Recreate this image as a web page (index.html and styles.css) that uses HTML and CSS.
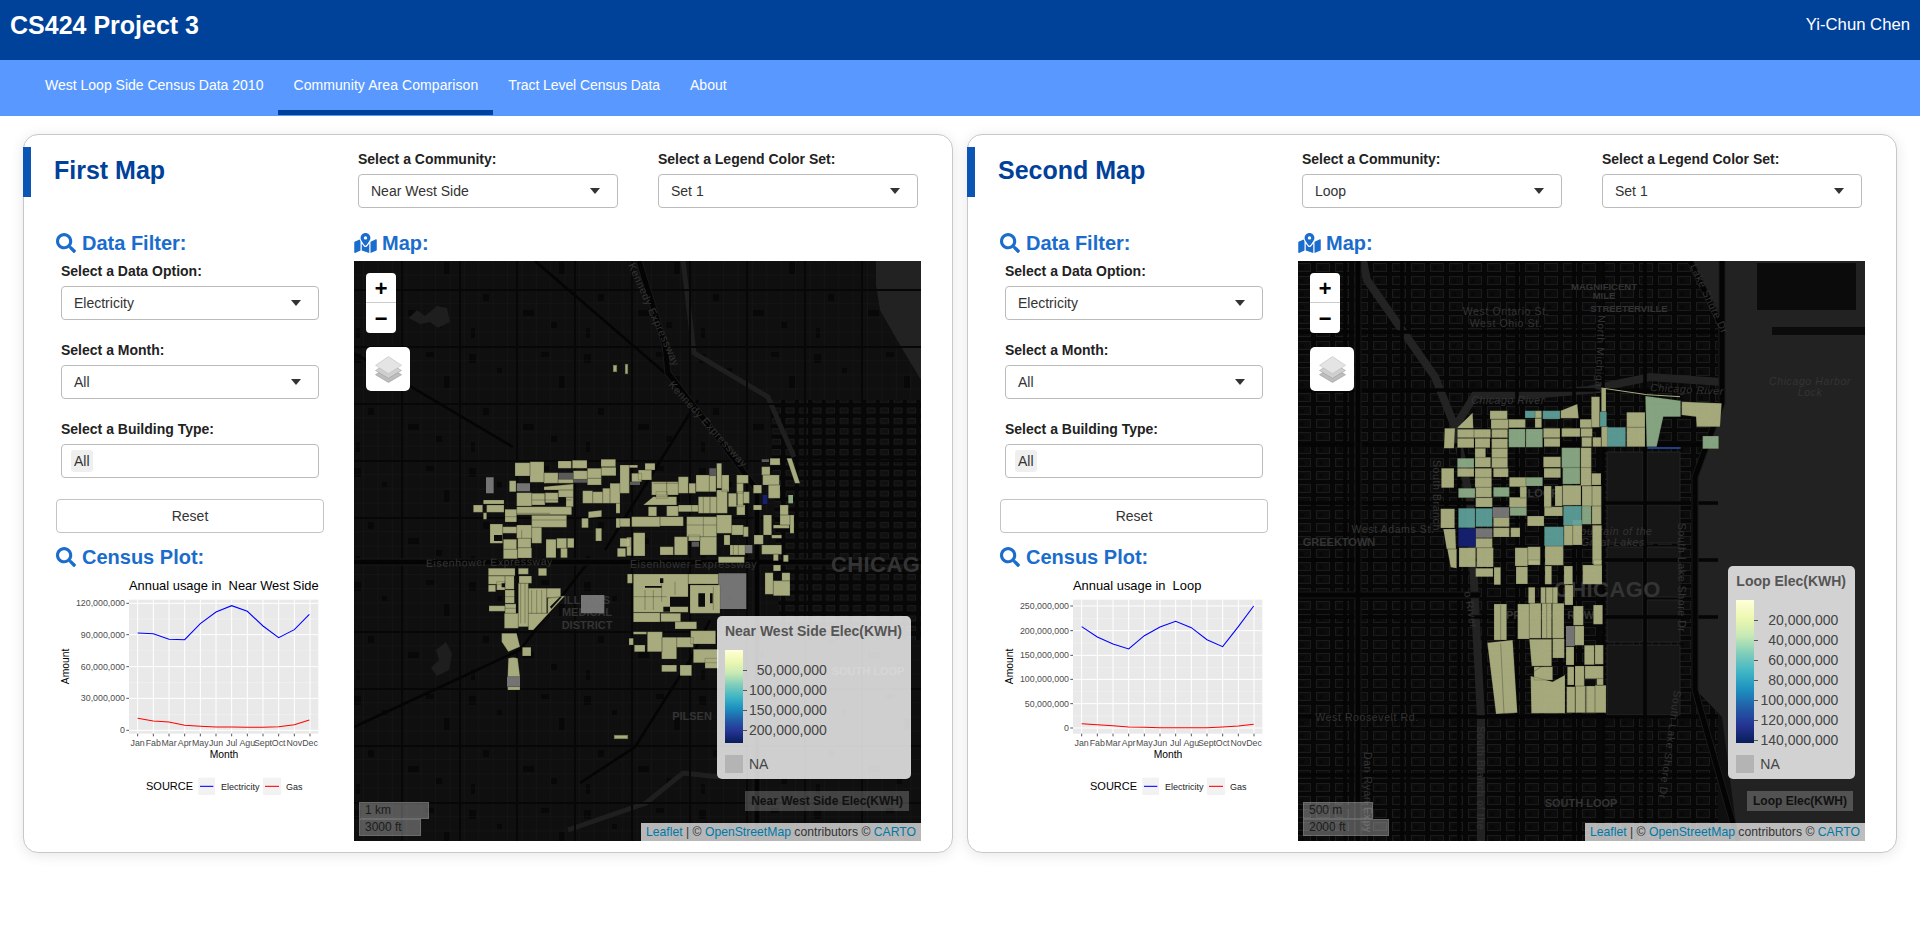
FILE: index.html
```html
<!DOCTYPE html>
<html lang="en">
<head>
<meta charset="utf-8">
<title>CS424 Project 3</title>
<link rel="stylesheet" href="styles.css">
</head>
<body>
<header class="topbar"><span class="brand">CS424 Project 3</span><span class="user">Yi-Chun Chen</span></header>
<nav class="tabs">
  <a class="tab">West Loop Side Census Data 2010</a>
  <a class="tab active">Community Area Comparison</a>
  <a class="tab">Tract Level Census Data</a>
  <a class="tab">About</a>
</nav>
<svg class="defs" width="0" height="0" aria-hidden="true">
  <symbol id="i-search" viewBox="0 0 512 512"><path d="M505 442.7L405.3 343c-4.5-4.5-10.6-7-17-7H372c27.6-35.3 44-79.7 44-128C416 93.1 322.9 0 208 0S0 93.1 0 208s93.1 208 208 208c48.3 0 92.7-16.4 128-44v16.3c0 6.4 2.5 12.5 7 17l99.7 99.7c9.4 9.4 24.6 9.4 33.9 0l28.3-28.3c9.4-9.4 9.4-24.6.1-34zM208 336c-70.7 0-128-57.2-128-128 0-70.7 57.2-128 128-128 70.7 0 128 57.2 128 128 0 70.7-57.2 128-128 128z"/></symbol>
  <symbol id="i-map" viewBox="0 0 576 512"><path d="M288 0c-69.59 0-126 56.41-126 126 0 56.26 82.35 158.8 113.9 196.02 6.39 7.54 17.82 7.54 24.2 0C331.65 284.8 414 182.26 414 126 414 56.41 357.59 0 288 0zm0 168c-23.2 0-42-18.8-42-42s18.8-42 42-42 42 18.8 42 42-18.8 42-42 42zM20.12 215.95A32.006 32.006 0 0 0 0 245.66v250.32c0 11.32 11.43 19.06 21.94 14.86L160 448V214.92c-8.84-15.98-16.07-31.54-21.25-46.42L20.12 215.95zM288 359.67c-14.07 0-27.38-6.18-36.51-16.96-19.66-23.2-40.57-49.62-59.49-76.72v182l192 64V266c-18.92 27.09-39.82 53.52-59.49 76.72-9.13 10.77-22.44 16.95-36.51 16.95zm266.06-198.51L416 224v288l139.88-55.95A31.996 31.996 0 0 0 576 426.34V176.02c0-11.32-11.43-19.06-21.94-14.86z"/></symbol>
  <symbol id="i-layers" viewBox="0 0 26 26"><path class="lay-b" d="M13 10L25.5 18L13 25.5L.5 18z"/><path class="lay-m" d="M13 6L25.5 14L13 21.5L.5 14z"/><path class="lay-t" d="M13 .5L25.5 9L13 17L.5 9z"/></symbol>
  <pattern id="minor1" width="14.4" height="14.25" patternUnits="userSpaceOnUse" x="3" y="4"><path d="M14.4 0H0V14.25" class="minor"/></pattern>
  <pattern id="bld1" width="115" height="114" patternUnits="userSpaceOnUse" x="3" y="4"><path class="bld" d="M6 8h7v9H6zM34 22h5v5h-5zM78 6h8v5h-8zM96 30h6v12h-6zM20 62h6v7h-6zM60 78h11v6H60zM88 90h6v6h-6zM8 96h4v10H8z"/></pattern>
  <pattern id="dense1" width="13.5" height="10.4" patternUnits="userSpaceOnUse" x="0" y="0"><rect width="13.5" height="10.4" class="dense-bg"/><rect x="3" y="2.5" width="8" height="5" class="dense-cell"/></pattern>
  <pattern id="dense2" width="19" height="13" patternUnits="userSpaceOnUse" x="2" y="1"><rect width="19" height="13" class="dense-bg"/><rect x="3.5" y="2.5" width="13" height="8" class="dense-cell2"/><path class="bld" d="M6 5h4v4H6z"/></pattern>
</svg>
<main class="board">

<section class="card">
  <div class="card-top">
    <h2 class="card-title">First Map</h2>
    <div class="top-field"><label class="lbl">Select a Community:</label><div class="sel">Near West Side</div></div>
    <div class="top-field"><label class="lbl">Select a Legend Color Set:</label><div class="sel">Set 1</div></div>
  </div>
  <div class="card-body">
    <div class="side">
      <h3 class="head"><svg class="ico"><use href="#i-search"/></svg>Data Filter:</h3>
      <div class="field"><label class="lbl">Select a Data Option:</label><div class="sel">Electricity</div></div>
      <div class="field"><label class="lbl">Select a Month:</label><div class="sel">All</div></div>
      <div class="field"><label class="lbl">Select a Building Type:</label><div class="multi"><span class="chip">All</span></div></div>
      <button class="reset" type="button">Reset</button>
      <h3 class="head"><svg class="ico"><use href="#i-search"/></svg>Census Plot:</h3>
      <svg class="plot" viewBox="0 0 840 720">
        <text class="p-title" x="237" y="58">Annual usage in  Near West Side</text>
        <rect class="p-bg" x="237" y="86" width="568" height="402"/>
        <path class="p-minor" d="M237 144h568M237 239h568M237 334h568M237 430h568"/>
        <path class="p-major" d="M237 97h568M237 191h568M237 287h568M237 382h568M237 478h568M263 86v402M310 86v402M357 86v402M404 86v402M451 86v402M498 86v402M545 86v402M592 86v402M639 86v402M686 86v402M733 86v402M780 86v402"/>
        <path class="p-tick" d="M229 97h8M229 191h8M229 287h8M229 382h8M229 478h8M263 488v8M310 488v8M357 488v8M404 488v8M451 488v8M498 488v8M545 488v8M592 488v8M639 488v8M686 488v8M733 488v8M780 488v8"/>
        <g class="p-y"><text x="225" y="106">120,000,000</text><text x="225" y="200">90,000,000</text><text x="225" y="296">60,000,000</text><text x="225" y="391">30,000,000</text><text x="225" y="487">0</text></g>
        <g class="p-x"><text x="263" y="525">Jan</text><text x="310" y="525">Fab</text><text x="357" y="525">Mar</text><text x="404" y="525">Apr</text><text x="451" y="525">May</text><text x="498" y="525">Jun</text><text x="545" y="525">Jul</text><text x="592" y="525">Agu</text><text x="639" y="525">Sept</text><text x="686" y="525">Oct</text><text x="733" y="525">Nov</text><text x="780" y="525">Dec</text></g>
        <polyline class="p-blue" points="263,186 310,188 357,205 404,206 451,158 498,123 545,104 592,121 639,165 686,200 733,176 778,130"/>
        <polyline class="p-red" points="263,442 310,450 357,453 404,463 451,466 498,468 545,468 592,469 639,469 686,467 733,461 778,447"/>
        <text class="p-axis" x="522" y="560">Month</text>
        <text class="p-axis" transform="translate(58 286) rotate(-90)">Amount</text>
        <text class="p-src" x="288" y="657">SOURCE</text>
        <rect class="p-key" x="445" y="620" width="50" height="52"/><path class="p-blue" d="M450 646h40"/>
        <text class="p-leg" x="513" y="657">Electricity</text>
        <rect class="p-key" x="639" y="620" width="54" height="52"/><path class="p-red" d="M645 646h42"/>
        <text class="p-leg" x="708" y="657">Gas</text>
      </svg>
    </div>
    <div class="map-col">
      <h3 class="head"><svg class="ico ico-map"><use href="#i-map"/></svg>Map:</h3>
      <div class="map">
        <svg class="basemap" viewBox="354 261 567 580">
          <rect class="m-bg" x="354" y="261" width="567" height="580"/>
          <rect fill="url(#bld1)" x="354" y="261" width="567" height="580"/>
          <rect fill="url(#minor1)" x="354" y="261" width="567" height="580"/>
          <path fill="url(#dense1)" d="M770 400H921V640H780z"/>
          <path class="m-lake" d="M876 261H921V380L900 345 880 310 876 285z"/>
          <path class="m-park" d="M409 318l8-8 8 6 12-10 10 2 3 14-12 6-8-6-10 2zM436 650l10-8 6 12-3 16-12 6-6-8 8-8z"/>
          <path class="m-river" d="M683 261L687 293 694 353 768 397 794 457M568 830L646 803 683 773 720 777"/>
          <path class="m-road" d="M402 261V841M460 261V841M517 261V841M575 261V841M632 261V841M690 261V841M747 261V841M805 261V841M862 261V841M354 290H921M354 347H921M354 404H921M354 461H921M354 518H921M354 632H921M354 689H921M354 746H921M354 803H921"/>
          <path class="m-road2" d="M535 261L665 373M354 353L513 447M580 783L635 747 690 660 710 620M605 550L698 400M354 727L520 650 590 560"/>
          <path class="m-exp-c" d="M354 562H921M757 841V490L720 440 668 373 665 345 639 261"/>
          <path class="m-exp" d="M354 562H921M757 841V490L720 440 668 373 665 345 639 261"/>
          <g class="m-label">
            <text x="426" y="567" class="ml-n" transform="rotate(-1 426 567)">Eisenhower Expressway</text>
            <text x="630" y="568" class="ml-n">Eisenhower Expressway</text>
            <text class="ml-n" transform="translate(628 265) rotate(66)">Kennedy Expressway</text>
            <text class="ml-n" transform="translate(668 385) rotate(48)">Kennedy Expressway</text>
            <text class="ml-b ml-c" x="587" y="604">ILLINOIS</text>
            <text class="ml-b ml-c" x="587" y="616">MEDICAL</text>
            <text class="ml-b ml-c" x="587" y="629">DISTRICT</text>
            <text class="ml-b ml-c" x="692" y="720">PILSEN</text>
            <text class="ml-b ml-c" x="868" y="675">SOUTH LOOP</text>
            <text class="ml-big" x="831" y="572">CHICAGO</text>
          </g>
          <g transform="translate(470 450) scale(.33333)">
            <path class="t-gray" d="M48 82h23v48h-23zM140 100h40v24h-40zM333 435h70v55h-70zM111 680h39v30h-39z"/>
            <path class="t-dgray" d="M265 68h45v20h-45zM310 88h42v10h-42z"/>
            <path class="t-tan" d="M135 38h45v40h-45zM180 35h42v62h-42zM264 33h40v22h-40zM307 31h44v24h-44zM393 28h44v22h-44zM352 55h42v30h-42zM394 52h44v25h-44zM222 68h42v32h-42zM264 88h46v12h-46zM310 62h42v26h-42zM352 85h42v20h-42zM118 92h20v33h-20zM222 110l88-8v18h-88zM140 128h45v40h-45zM185 130h40v35h-40zM225 128h40v30h-40zM265 120h45v22h-45zM288 142h22v28h-22zM338 122h30v38h-30zM368 125h30v35h-30zM398 115h22v45h-22zM420 100h30v60h-30zM40 150h62v12h-62zM50 165h52v22h-52zM10 165h28v22h-28zM40 188h10v20h-10zM105 178h35v38h-35zM140 170h165v24h-165zM185 196h105v36h-105zM60 222h38v58h-38zM98 230h42v20h-42zM140 225h45v40h-45zM185 232h30v48h-30zM100 268h40v30h-40zM100 298h42v28h-42zM143 265h40v28h-40zM143 293h42v31h-42zM228 268h30v55h-30zM260 265h30v30h-30zM272 295h20v28h-20zM292 265h20v28h-20zM355 185l40-4v19l-40 4zM335 205h20v28h-20zM377 235h18v38h-18zM438 160h12v30h-12zM438 205h12v28h-12zM442 295h25v25h-25zM470 262h14v55h-14zM55 355h80v22h-80zM55 378h50v25h-50zM55 405h22v20h-22zM80 395h25v25h-25zM105 378h28v40h-28zM145 355h30v18h-30zM205 355h25v22h-25zM147 378h38v22h-38zM105 420h33v40h-33zM57 467h48v17h-48zM105 462h33v28h-33zM103 490h42v45h-42zM145 400h30v130h-30zM175 415h55v75h-55zM230 415h42v28h-42zM233 445L285 437 190 540H175V490H233zM95 550h45l10 40-35 15-20-30zM157 592h26v26h-26zM115 625q15-5 28 0l7 55h-37zM113 710h37v10h-37z"/>
            <path class="t-hole" d="M72 255h25v18h-25zM266 142h20v18h-20zM95 400h10v12h-10zM133 378h8v82h-8zM240 470l30-30 6 0-32 36zM195 540l40-45 6 4-36 41z"/>
            <path class="t-line" d="M152 400v120M165 400v120M185 420v70M200 420v70M215 420v70M105 440h33M105 475h33M225 130v30M265 130v30M185 150h120M185 210h105M140 190h100M230 100h120M105 200h35M155 240v25"/>
          </g>
          <g transform="translate(620 450) scale(.33333)">
            <path class="t-gray" d="M295 370h84v107h-84zM375 285h22v25h-22z"/>
            <path class="t-dgray" d="M268 55h20v22h-20zM30 95h30v10h-30zM215 275h22v15h-22zM425 28h22v8h-22z"/>
            <path class="t-tan" d="M0 45h28v85h-28zM28 45h25v8h-25zM55 60h40v30h-40zM75 40h30v20h-30zM35 70h30v25h-30zM95 95h45v40h-45zM140 95h35v40h-35zM175 80h30v50h-30zM207 100h20v30h-20zM228 75h40v50h-40zM268 77h20v48h-20zM290 40h15v75h-15zM305 75h22v50h-22zM350 75h35v25h-35zM350 100h20v30h-20zM370 125h18v35h-18zM70 165l30-25h70v25zM108 125h35v20h-35zM85 170h25v28h-25zM140 168h35v30h-35zM175 165h60v20h-60zM235 140h35v50h-35zM270 140h20v50h-20zM290 120h32v70h-32zM325 130h25v40h-25zM350 165h25v30h-25zM352 125h18v45h-18zM0 205h30v25h-30zM35 200h85v30h-85zM120 200h70v28h-70zM200 200h90v60h-90zM290 195h45v55h-45zM335 225h35v30h-35zM370 230h15v30h-15zM40 248h35v70h-35zM0 265h30v25h-30zM120 290h40v25h-40zM163 260h40v55h-40zM205 255h35v18h-35zM240 260h50v55h-50zM312 255h18v30h-18zM330 285h45v30h-45zM402 255h28v28h-28zM295 320h78v18h-78zM425 285h60v28h-60zM460 312h15v20h-15zM490 315h15v20h-15zM400 105h25v25h-25zM425 50h25v25h-25zM428 75h50v30h-50zM450 25h30v20h-30zM445 105h35v40h-35zM400 165h25v15h-25zM480 165h25v30h-25zM430 195h25v60h-25zM480 195h30v30h-30zM510 195h12v55h-12zM460 225h48v10h-48zM455 255h30v10h-30zM500 25h15l25 75h-15zM22 372h15v28h-15zM40 372h165v115h-165zM205 372h90v30h-90zM210 405h90v85h-90zM40 488h80v28h-80zM122 490h60v25h-60zM165 515h65v22h-65zM40 545h40v8h-40zM82 545h45v60h-45zM27 565h13v20h-13zM43 585h32v20h-32zM125 562h45v65h-45zM170 562h50v30h-50zM212 542h75v40h-75zM125 645h45v20h-45zM180 645h35v32h-35zM220 598h75v40h-75zM255 625h40v30h-40zM435 368h25v65h-25zM460 392h50v45h-50zM485 368h25v25h-25zM460 345h22v18h-22z"/>
            <path class="t-green" d="M505 135h14v25h-14z"/>
            <path class="t-navy" d="M428 135h14v27h-14z"/>
            <path class="t-hole" d="M120 385h10v14h-10zM75 408h50v5h-50zM150 440h55v30h-55zM130 470h20v15h-20zM235 430h20v40h-20zM205 402h5v85h-5zM270 430h8v30h-8zM460 368h25v22h-25z"/>
            <path class="t-line" d="M75 420v60M100 420v60M125 395v60M165 395v40M40 440h100M215 150v50M250 200v60M200 225h90M250 140v50M100 100h75M340 285v30M355 285v30M280 410v70"/>
          </g>
          <path class="t-tan" d="M613 365h4v7h-4zM625 364h3v10h-3zM614 735h14v4h-14z"/>
        </svg>
        <div class="zoomctl"><a class="zbtn">+</a><a class="zbtn">−</a></div>
        <div class="layerbtn"><svg class="layer-ico"><use href="#i-layers"/></svg></div>
        <div class="legend">
          <div class="leg-title">Near West Side Elec(KWH)</div>
          <div class="leg-scale">
            <div class="leg-bar"></div>
            <div class="leg-labels"><span class="leg-num">50,000,000</span><span class="leg-num">100,000,000</span><span class="leg-num">150,000,000</span><span class="leg-num">200,000,000</span></div>
          </div>
          <div class="leg-na"><i class="na-box"></i>NA</div>
        </div>
        <div class="infobox">Near West Side Elec(KWH)</div>
        <div class="scale"><div class="scale-line s70">1 km</div><div class="scale-line s62">3000 ft</div></div>
        <div class="attr"><a>Leaflet</a> | © <a>OpenStreetMap</a> contributors © <a>CARTO</a></div>
      </div>
    </div>
  </div>
</section>

<section class="card">
  <div class="card-top">
    <h2 class="card-title">Second Map</h2>
    <div class="top-field"><label class="lbl">Select a Community:</label><div class="sel">Loop</div></div>
    <div class="top-field"><label class="lbl">Select a Legend Color Set:</label><div class="sel">Set 1</div></div>
  </div>
  <div class="card-body">
    <div class="side">
      <h3 class="head"><svg class="ico"><use href="#i-search"/></svg>Data Filter:</h3>
      <div class="field"><label class="lbl">Select a Data Option:</label><div class="sel">Electricity</div></div>
      <div class="field"><label class="lbl">Select a Month:</label><div class="sel">All</div></div>
      <div class="field"><label class="lbl">Select a Building Type:</label><div class="multi"><span class="chip">All</span></div></div>
      <button class="reset" type="button">Reset</button>
      <h3 class="head"><svg class="ico"><use href="#i-search"/></svg>Census Plot:</h3>
      <svg class="plot" viewBox="0 0 840 720">
        <text class="p-title" x="237" y="58">Annual usage in  Loop</text>
        <rect class="p-bg" x="237" y="86" width="568" height="402"/>
        <path class="p-minor" d="M237 142h568M237 216h568M237 289h568M237 362h568M237 435h568"/>
        <path class="p-major" d="M237 105h568M237 179h568M237 253h568M237 325h568M237 398h568M237 471h568M263 86v402M310 86v402M357 86v402M404 86v402M451 86v402M498 86v402M545 86v402M592 86v402M639 86v402M686 86v402M733 86v402M780 86v402"/>
        <path class="p-tick" d="M229 105h8M229 179h8M229 253h8M229 325h8M229 398h8M229 471h8M263 488v8M310 488v8M357 488v8M404 488v8M451 488v8M498 488v8M545 488v8M592 488v8M639 488v8M686 488v8M733 488v8M780 488v8"/>
        <g class="p-y"><text x="225" y="114">250,000,000</text><text x="225" y="188">200,000,000</text><text x="225" y="262">150,000,000</text><text x="225" y="334">100,000,000</text><text x="225" y="407">50,000,000</text><text x="225" y="480">0</text></g>
        <g class="p-x"><text x="263" y="525">Jan</text><text x="310" y="525">Fab</text><text x="357" y="525">Mar</text><text x="404" y="525">Apr</text><text x="451" y="525">May</text><text x="498" y="525">Jun</text><text x="545" y="525">Jul</text><text x="592" y="525">Agu</text><text x="639" y="525">Sept</text><text x="686" y="525">Oct</text><text x="733" y="525">Nov</text><text x="780" y="525">Dec</text></g>
        <polyline class="p-blue" points="263,167 310,198 357,219 404,234 451,194 498,168 545,151 592,170 639,206 686,227 733,167 779,105"/>
        <polyline class="p-red" points="263,458 310,461 357,464 404,468 451,469 498,470 545,470 592,470 639,470 686,468 733,465 779,460"/>
        <text class="p-axis" x="522" y="560">Month</text>
        <text class="p-axis" transform="translate(58 286) rotate(-90)">Amount</text>
        <text class="p-src" x="288" y="657">SOURCE</text>
        <rect class="p-key" x="445" y="620" width="50" height="52"/><path class="p-blue" d="M450 646h40"/>
        <text class="p-leg" x="513" y="657">Electricity</text>
        <rect class="p-key" x="639" y="620" width="54" height="52"/><path class="p-red" d="M645 646h42"/>
        <text class="p-leg" x="708" y="657">Gas</text>
      </svg>
    </div>
    <div class="map-col">
      <h3 class="head"><svg class="ico ico-map"><use href="#i-map"/></svg>Map:</h3>
      <div class="map">
        <svg class="basemap" viewBox="1298 261 567 580">
          <rect class="m-bg" x="1298" y="261" width="567" height="580"/>
          <rect fill="url(#dense2)" x="1298" y="261" width="420" height="580"/>
          <path class="m-lake" d="M1690 261H1865V841H1738L1722 717 1696 690V560L1695 477 1722 403V327z"/>
          <path class="m-dark" d="M1757 263h99v47h-99zM1772 327h93v8h-93z"/>
          <path class="m-grant" d="M1607 452h36v50h-36zM1647 452h33v50h-33zM1607 505h36v38h-36zM1647 505h33v38h-33zM1607 547h36v95h-36zM1647 547h33v50h-33zM1647 600h33v42h-33zM1607 645h73v70h-73z"/>
          <path class="m-river2" d="M1363 261L1367 280 1435 377 1455 427 1470 500 1477 643 1481 717V841M1455 427L1475 395 1530 395 1588 390 1650 377 1722 382"/>
          <path class="m-road2b" d="M1345 261V841M1402 261V841M1459 427V841M1517 261V841M1574 261V841M1603 261V841M1645 261V841M1298 332H1718M1298 390H1718M1298 445H1718M1298 503H1718M1298 560H1718M1298 617H1718M1298 717H1718M1298 775H1718"/>
          <path class="m-exp-c" d="M1358 261V841M1722 261L1722 403 1695 477V690L1738 841M1298 595H1480M1690 261L1722 327"/>
          <path class="m-exp" d="M1358 261V841M1722 261L1722 403 1695 477V690L1738 841M1298 595H1480M1690 261L1722 327"/>
          <g class="m-label">
            <text class="ml-b ml-c ml-9" x="1604" y="290">MAGNIFICENT</text>
            <text class="ml-b ml-c ml-9" x="1604" y="299">MILE</text>
            <text class="ml-b ml-c ml-9" x="1629" y="312">STREETERVILLE</text>
            <text class="ml-n ml-c" x="1506" y="315">West Ontario St.</text>
            <text class="ml-n ml-c" x="1506" y="327">West Ohio St.</text>
            <text class="ml-i" x="1650" y="391" transform="rotate(3 1650 391)">Chicago River</text>
            <text class="ml-i ml-c" x="1508" y="404">Chicago River</text>
            <text class="ml-i ml-c" x="1810" y="385">Chicago Harbor</text>
            <text class="ml-i ml-c" x="1810" y="396">Lock</text>
            <text class="ml-b ml-c" x="1543" y="497">LOOP</text>
            <text class="ml-n ml-c" x="1393" y="533">West Adams St.</text>
            <text class="ml-b ml-c" x="1339" y="546">GREEKTOWN</text>
            <text class="ml-i ml-c" x="1613" y="535">Fountain of the</text>
            <text class="ml-i ml-c" x="1613" y="546">Great Lakes</text>
            <text class="ml-n" transform="translate(1598 315) rotate(92)">North Michigan</text>
            <text class="ml-n" transform="translate(1690 266) rotate(65)">Lake Shore Dr</text>
            <text class="ml-n" transform="translate(1678 523) rotate(90)">South Lake Shore Dr</text>
            <text class="ml-n" transform="translate(1674 690) rotate(98)">South Lake Shore Dr</text>
            <text class="ml-n" transform="translate(1477 726) rotate(90)">South Branch of the</text>
            <text class="ml-n" transform="translate(1433 460) rotate(90)">South Branch</text>
            <text class="ml-n" transform="translate(1464 592) rotate(80)">o River</text>
            <text class="ml-n ml-c" x="1367" y="721">West Roosevelt Rd.</text>
            <text class="ml-n" transform="translate(1364 752) rotate(90)">Dan Ryan Expy</text>
            <text class="ml-b ml-c" x="1581" y="807">SOUTH LOOP</text>
            <text class="ml-b ml-c" x="1550" y="619">PRINTER'S ROW</text>
            <text class="ml-big" x="1554" y="597">CHICAGO</text>
          </g>
          <g transform="translate(1430 380) scale(.33333)">
            <path class="t-tan2" d="M80 145L128 98 130 145zM180 92h52v25h-52zM183 118h52v28h-52zM236 118h50v25h-50zM315 92h20v22h-20zM315 115h20v28h-20zM392 92L442 72 446 115H392zM450 118h35v25h-35zM484 50h25v92h-25zM514 25h14v70h-14zM44 145H75L72 205H42zM82 148h50v25h-50zM82 175h50v28h-50zM132 148h50v25h-50zM135 175h45v28h-45zM185 148h48v25h-48zM185 176h48v28h-48zM340 145h50v28h-50zM342 175h48v25h-48zM395 145h55v25h-55zM452 145h35v25h-35zM455 172h30v28h-30zM488 172h25v28h-25zM514 140h20v60h-20zM590 97h55v45h-55zM590 142h55v58h-55zM755 65L875 70 870 140H800L798 110 755 105zM135 205h32v28h-32zM185 205h48v28h-48zM135 232h47v30h-47zM185 233h48v30h-48zM82 265h50v25h-50zM135 265h50v28h-50zM190 265h45v26h-45zM340 230h52v32h-52zM342 265h50v28h-50zM452 203h32v60h-32zM452 262h32v55h-32zM485 280h28v35h-28zM34 265h38v58h-38zM135 292h50v30h-50zM238 292h50v28h-50zM137 322h48v30h-48zM270 320h20v35h-20zM238 352h52v30h-52zM137 353h50v28h-50zM342 318h22v65h-22zM375 318h22v60h-22zM398 316h55v60h-55zM456 318h30v60h-30zM486 318h28v60h-28zM32 386h42v58h-42zM190 412h48v28h-48zM292 408h50v30h-50zM343 380h55v28h-55zM486 378h28v55h-28zM137 475h50v28h-50zM190 443h48v28h-48zM242 443h28v28h-28zM402 436h26v60h-26zM428 420h28v75h-28zM40 447H76L78 507H50zM52 507H80V565L62 562zM87 503h50v58h-50zM140 503h50v58h-50zM255 503h38v55h-38zM293 500h38v55h-38zM345 498h55v58h-55zM487 436h28v115h-28z"/>
            <path class="t-sage" d="M236 147h50v55h-50zM288 147h50v55h-50zM82 235h50v28h-50zM395 203h55v60h-55zM398 262h52v50h-52zM288 292h50v26h-50zM85 325h50v28h-50zM190 322h48v28h-48zM240 382h50v25h-50zM456 378h28v55h-28zM646 48L752 62V110H700L680 200H650zM818 168h48v38h-48z"/>
            <path class="t-teal" d="M285 92h30v22h-30zM338 92h52v25h-52zM510 95h20v45h-20zM532 142h55v58h-55zM85 385h50v58h-50zM137 385h50v55h-50zM400 378h55v58h-55zM343 440h58v58h-58z"/>
            <path class="t-gray" d="M188 382h50v30h-50zM137 445h50v28h-50z"/>
            <path class="t-navy" d="M85 445h52v55h-52z"/>
            <path class="t-navy2" d="M652 201h100v6h-100z"/>
            <path class="t-outline" d="M514 24L650 44 750 50"/>
          </g>
          <g transform="translate(1470 560) scale(.33333)">
            <path class="t-tan2" d="M17 25h52v25h-52zM72 22h20v52h-20zM138 20h35v52h-35zM175 0h35v15h-35zM225 18h20v55h-20zM282 18h26v55h-26zM284 75h25v60h-25zM338 15h58v58h-58zM370 0h25v15h-25zM175 82h20v48h-20zM212 82h15v48h-15zM228 82h20v48h-20zM248 82h15v48h-15zM72 132h38v108h-38zM143 132h35v105h-35zM178 130h35v105h-35zM215 130h30v105h-30zM247 130h35v105h-35zM310 138h30v58h-30zM370 135h28v58h-28zM314 198h28v58h-28zM52 248L128 240 142 458 78 462zM178 238h67v80h-60zM248 236h35v58h-35zM288 260h24v55h-24zM343 256h30v58h-30zM375 255h25v58h-25zM192 320h56v40h-56zM182 348L248 365 285 345V460H184zM292 320h20v55h-20zM315 318h28v60h-28zM345 318h55v38h-55zM380 355h20v20h-20zM290 380h25v78h-25zM316 378h30v80h-30zM347 378h28v80h-28zM375 376h33v82h-33z"/>
            <path class="t-gray" d="M288 198h26v60h-26z"/>
            <path class="t-line" d="M92 135v105M230 130v105M190 335l25-15M350 378v80M92 250l10 210"/>
          </g>
        </svg>
        <div class="zoomctl"><a class="zbtn">+</a><a class="zbtn">−</a></div>
        <div class="layerbtn"><svg class="layer-ico"><use href="#i-layers"/></svg></div>
        <div class="legend">
          <div class="leg-title">Loop Elec(KWH)</div>
          <div class="leg-scale">
            <div class="leg-bar tall"></div>
            <div class="leg-labels tall"><span class="leg-num">20,000,000</span><span class="leg-num">40,000,000</span><span class="leg-num">60,000,000</span><span class="leg-num">80,000,000</span><span class="leg-num">100,000,000</span><span class="leg-num">120,000,000</span><span class="leg-num">140,000,000</span></div>
          </div>
          <div class="leg-na"><i class="na-box"></i>NA</div>
        </div>
        <div class="infobox">Loop Elec(KWH)</div>
        <div class="scale"><div class="scale-line s70">500 m</div><div class="scale-line s86">2000 ft</div></div>
        <div class="attr"><a>Leaflet</a> | © <a>OpenStreetMap</a> contributors © <a>CARTO</a></div>
      </div>
    </div>
  </div>
</section>
</main>
</body>
</html>
```
FILE: styles.css
```css
* { box-sizing: border-box; }
html, body { margin: 0; height: 946px; overflow: hidden; background: #fff; }
body { font-family: "Liberation Sans", Arial, sans-serif; font-size: 14px; color: #333; }

.topbar { height: 60px; background: #00419a; color: #fff; display: flex; justify-content: space-between; align-items: center; padding: 0 10px 10px; }
.brand { font-size: 25px; font-weight: 700; }
.user { font-size: 16.7px; }

.tabs { height: 56px; background: #5999ff; display: flex; padding-left: 30px; }
.tab { height: 55px; padding: 0 15px; color: #fff; font-size: 14px; line-height: 50px; border-bottom: 5px solid transparent; }
.tab.active { border-bottom-color: #00419a; letter-spacing: .08px; }
.tab:nth-child(3) { letter-spacing: -.08px; }

.defs { position: absolute; }

.board { display: grid; grid-template-columns: 930px 930px; gap: 14px; padding: 18px 23px 0; }
.card { height: 719px; background: #fff; border: 1px solid #c8c8c8; border-radius: 15px; box-shadow: 0 2px 14px rgba(0,0,0,.1); }

.card-top { display: flex; height: 97px; padding-top: 12px; }
.card-title { flex: none; width: 335px; height: 50px; margin: 0 0 0 -1px; padding-left: 23px; border-left: 8px solid #0b55b5; color: #00419a; font-size: 25px; font-weight: 700; line-height: 46px; }
.top-field { flex: none; width: 260px; padding-top: 2px; }
.top-field + .top-field { margin-left: 40px; }

.lbl { display: block; height: 20px; margin-bottom: 5px; font-weight: 700; font-size: 14px; line-height: 20px; color: #222; }
.side .lbl { line-height: 21px; }
.sel, .multi { position: relative; height: 34px; border: 1px solid #bbb; border-radius: 4px; background: #fff; padding-left: 12px; line-height: 33px; color: #333; font-size: 14px; }
.sel::after { content: ""; position: absolute; right: 17px; top: 13px; border: 5px solid transparent; border-top: 6px solid #333; border-bottom: 0; }
.multi { padding-left: 9px; line-height: 22px; padding-top: 5px; }
.chip { display: inline-block; height: 22px; padding: 0 3px; background: #efefef; border-radius: 3px; line-height: 23px; }

.card-body { display: flex; gap: 30px; padding-left: 32px; }
.side { flex: none; width: 268px; }
.map-col { flex: none; width: 567px; }

.head { display: flex; align-items: center; height: 22px; margin: 0; color: #1a6dcc; font-size: 20px; font-weight: 700; }
.ico { width: 20px; height: 20px; margin-right: 6px; fill: #1a6dcc; }
.ico-map { width: 23px; margin-right: 5px; }
.map-col .head { margin-bottom: 7px; }

.field { padding: 0 5px; margin-bottom: 20px; }
.side .head + .field { margin-top: 7px; }
.side .field:nth-of-type(3) { margin-bottom: 21px; }
.reset { display: block; width: 268px; height: 34px; margin-bottom: 13px; background: #fff; border: 1px solid #c4c4c4; border-radius: 4px; color: #333; font: 14px "Liberation Sans", Arial, sans-serif; }

.plot { display: block; width: 280px; height: 240px; margin: 3px 0 0 -6px; font-family: "Liberation Sans", Arial, sans-serif; }
.p-title { font-size: 38.7px; white-space: pre; fill: #000; }
.p-bg { fill: #e9e9e9; }
.p-minor { stroke: #f4f4f4; stroke-width: 1.5; fill: none; }
.p-major { stroke: #fff; stroke-width: 3; fill: none; }
.p-tick { stroke: #333; stroke-width: 2.5; fill: none; }
.p-y text { font-size: 26.5px; fill: #4d4d4d; text-anchor: end; }
.p-x text { font-size: 26.5px; fill: #4d4d4d; text-anchor: middle; }
.p-axis { font-size: 31px; fill: #000; text-anchor: middle; }
.p-src { font-size: 33px; fill: #000; }
.p-leg { font-size: 27px; fill: #222; }
.p-key { fill: #f2f2f2; }
.p-blue { fill: none; stroke: #0000ff; stroke-width: 3.2; }
.p-red { fill: none; stroke: #ff0000; stroke-width: 3.2; }

.map { position: relative; width: 567px; height: 580px; background: #0f0f0f; overflow: hidden; }
.basemap { display: block; width: 567px; height: 580px; }

.m-bg { fill: #0f0f0f; }
.minor { fill: none; stroke: #1a1a1a; stroke-width: .8; }
.bld { fill: #080808; }
.dense-bg { fill: #070707; }
.dense-cell { fill: #101010; stroke: #202020; stroke-width: .7; }
.dense-cell2 { fill: #0c0c0c; stroke: #1b1b1b; stroke-width: 1; }
.m-lake { fill: #222; }
.m-dark { fill: #0b0b0b; }
.m-park { fill: #1e1e1e; }
.m-grant { fill: #161616; stroke: #242424; stroke-width: 1; }
.m-river { fill: none; stroke: #1f1f1f; stroke-width: 5; }
.m-river2 { fill: none; stroke: #232323; stroke-width: 8; }
.m-road { fill: none; stroke: #070707; stroke-width: 2; }
.m-road2 { fill: none; stroke: #050505; stroke-width: 2.6; }
.m-road2b { fill: none; stroke: #050505; stroke-width: 3.6; }
.m-exp-c { fill: none; stroke: #191919; stroke-width: 7; }
.m-exp { fill: none; stroke: #040404; stroke-width: 5; }

.t-tan { fill: #b3b785; fill-opacity: .93; stroke: rgba(40,40,25,.45); stroke-width: 1.5; }
.t-tan2 { fill: #b0b584; fill-opacity: .93; stroke: rgba(40,40,25,.4); stroke-width: 1.5; }
.t-sage { fill: #8eae89; fill-opacity: .93; stroke: rgba(40,40,25,.4); stroke-width: 1.5; }
.t-teal { fill: #5fa39c; fill-opacity: .93; stroke: rgba(40,40,25,.4); stroke-width: 1.5; }
.t-green { fill: #8aa87c; }
.t-gray { fill: #7c7c7c; fill-opacity: .93; }
.t-dgray { fill: #5a5a5a; }
.t-navy { fill: #14206e; }
.t-navy2 { fill: #223f86; }
.t-outline { fill: none; stroke: #a9ad7f; stroke-width: 3; }
.t-hole { fill: #0c0c0c; }
.t-line { fill: none; stroke: rgba(30,30,20,.55); stroke-width: 1.6; }

.m-label text { fill: #343434; font-family: "Liberation Sans", Arial, sans-serif; }
.ml-n { font-size: 10.5px; letter-spacing: .6px; }
.ml-i { font-size: 10.5px; font-style: italic; letter-spacing: .6px; }
.ml-b { font-size: 11px; font-weight: 700; }
.ml-9 { font-size: 9.5px; }
.ml-c { text-anchor: middle; }
.ml-big { font-size: 22px; font-weight: 700; letter-spacing: .4px; }

.zoomctl { position: absolute; left: 12px; top: 12px; width: 30px; height: 60px; background: #fff; border-radius: 4px; }
.zbtn { display: block; height: 30px; text-align: center; font: 700 22px/35px "Liberation Mono", monospace; color: #000; }
.zbtn:first-child { border-bottom: 1px solid #ccc; }
.layerbtn { position: absolute; left: 12px; top: 86px; width: 44px; height: 44px; background: #fff; border-radius: 5px; display: flex; align-items: center; justify-content: center; }
.layer-ico { width: 27px; height: 27px; }
.lay-b { fill: #bdbdbd; stroke: #8f8f8f; stroke-width: .5; }
.lay-m { fill: #cfcfcf; stroke: #9a9a9a; stroke-width: .5; }
.lay-t { fill: #e4e4e4; stroke: #b8b8b8; stroke-width: .5; }

.legend { position: absolute; right: 10px; bottom: 62px; padding: 6px 9px 6px 8px; background: rgba(255,255,255,.8); border-radius: 5px; color: #444; font-size: 14px; }
.leg-title { height: 20px; margin-bottom: 8px; font-weight: 700; line-height: 18px; color: #555; white-space: nowrap; }
.leg-scale { display: flex; }
.leg-bar { width: 18px; height: 93px; background: linear-gradient(#ffffd9, #edf8b1, #c7e9b4, #7fcdbb, #41b6c4, #1d91c0, #225ea8, #253494, #081d58); }
.leg-bar.tall { height: 143px; }
.leg-labels { height: 93px; display: flex; flex-direction: column; align-items: flex-end; padding-top: 10px; }
.leg-labels.tall { height: 143px; padding-top: 10px; }
.leg-num { position: relative; display: block; flex: none; width: 84px; height: 20px; line-height: 20px; text-align: right; }
.leg-num::before { content: ""; position: absolute; left: 0; top: 10px; width: 4px; height: 1px; background: #555; }
.leg-na { display: flex; align-items: center; margin-top: 12px; height: 18px; }
.na-box { width: 18px; height: 18px; margin-right: 6px; background: #b4b4b4; }

.infobox { position: absolute; right: 12px; bottom: 30px; height: 20px; padding: 0 6px; background: rgba(255,255,255,.22); color: #111; font-size: 12px; font-weight: 700; line-height: 20px; white-space: nowrap; }

.scale { position: absolute; left: 5px; bottom: 5px; }
.scale-line { height: 17px; padding-left: 5px; background: rgba(255,255,255,.3); border: 1px solid rgba(150,150,150,.35); color: #1c1c1c; font-size: 12px; line-height: 15px; }
.s70 { width: 70px; }
.s62 { width: 62px; }
.s86 { width: 86px; }

.attr { position: absolute; right: 0; bottom: 0; height: 18px; padding: 0 5px; background: rgba(255,255,255,.7); color: #333; font-size: 12.2px; line-height: 18px; white-space: nowrap; }
.attr a { color: #0078a8; }
```
